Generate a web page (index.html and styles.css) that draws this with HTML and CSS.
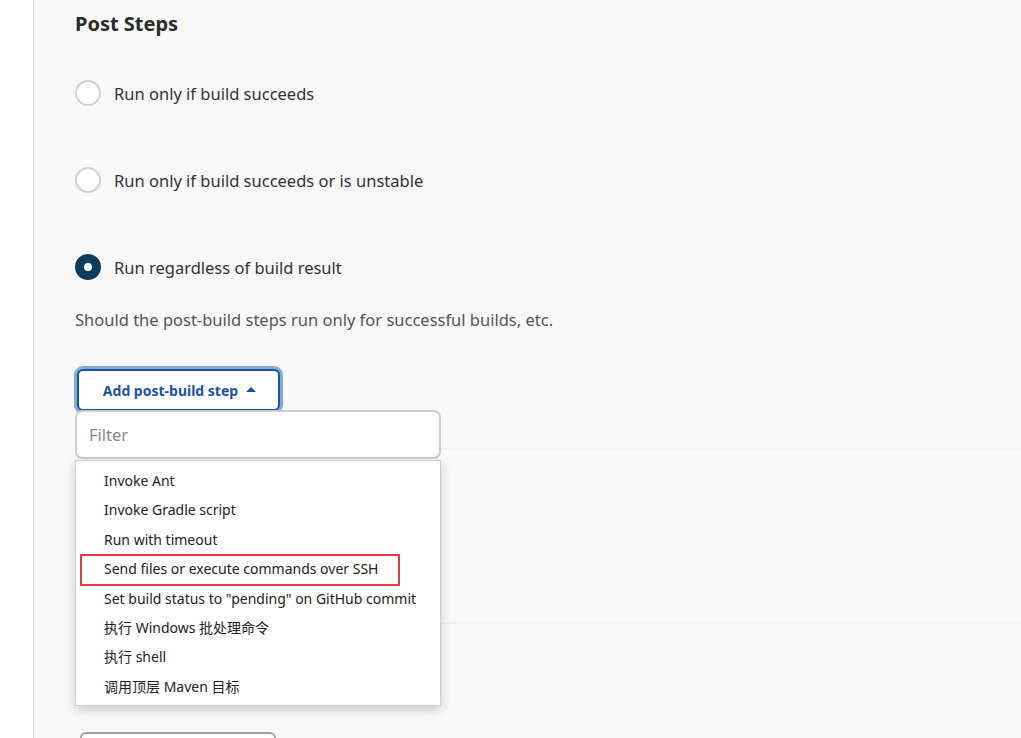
FILE: index.html
```html
<!DOCTYPE html>
<html>
<head>
<meta charset="utf-8">
<link rel="stylesheet" href="styles.css">
</head>
<body>
<div class="page">
  <aside class="side"></aside>
  <main class="main">
    <h2 class="title">Post Steps</h2>
    <div class="radios">
      <label class="radio"><span class="dot"></span><span>Run only if build succeeds</span></label>
      <label class="radio"><span class="dot"></span><span>Run only if build succeeds or is unstable</span></label>
      <label class="radio"><span class="dot on"></span><span>Run regardless of build result</span></label>
    </div>
    <p class="desc">Should the post-build steps run only for successful builds, etc.</p>
    <div class="addwrap">
      <button class="addbtn">Add post-build step <span class="tri"></span></button>
      <div class="popup">
        <div class="filter">Filter</div>
        <ul class="menu">
          <li>Invoke Ant</li>
          <li>Invoke Gradle script</li>
          <li>Run with timeout</li>
          <li class="hl">Send files or execute commands over SSH</li>
          <li>Set build status to "pending" on GitHub commit</li>
          <li>执行 Windows 批处理命令</li>
          <li>执行 shell</li>
          <li>调用顶层 Maven 目标</li>
        </ul>
      </div>
    </div>
    <section class="sect"></section>
    <section class="sect2"></section>
    <button class="btn2"></button>
  </main>
</div>
</body>
</html>
```
FILE: styles.css
```css
html, body { margin: 0; padding: 0; }
body {
  font-family: "Noto Sans", "Noto Sans CJK SC", sans-serif;
  background: #f8f8f8;
  color: #333;
  overflow: hidden;
  height: 738px;
}
.page { display: flex; height: 738px; }
.side {
  width: 33px;
  background: #fff;
  border-right: 1px solid #d4d4d4;
  flex: none;
}
.main {
  flex: 1;
  padding-left: 40px;
  background: #f8f8f8;
}
.title {
  margin: 10px 0 0 1px;
  font-size: 20px;
  font-weight: 700;
  color: #2b2b2b;
  line-height: 28px;
}
.radios { display: flex; flex-direction: column; gap: 61px; margin-top: 42px; }
.radio {
  display: flex;
  align-items: center;
  gap: 13px;
  font-size: 16.5px;
  color: #333;
  height: 26px;
  margin-left: 1px;
}
.dot {
  width: 22px; height: 22px;
  border: 2px solid #cbd3d8;
  border-radius: 50%;
  background: #fff;
  box-sizing: content-box;
  flex: none;
}
.dot.on {
  background: #0d3c5e;
  border-color: #0d3c5e;
  position: relative;
}
.dot.on::after {
  content: "";
  position: absolute;
  left: 7px; top: 7px;
  width: 8px; height: 8px;
  border-radius: 50%;
  background: #fff;
}
.desc {
  margin: 27px 0 0 1px;
  font-size: 16.5px;
  color: #555;
  line-height: 26px;
}
.addwrap { position: relative; margin-top: 36px; height: 42px; margin-left: 3px; }
.addbtn {
  width: 203px; height: 42px;
  border: 2px solid #1d4fa6;
  border-radius: 6px;
  background: #fff;
  box-shadow: 0 0 0 3px #84acd0;
  color: #1d4fa6;
  font-family: inherit;
  font-weight: 700;
  font-size: 14px;
  display: flex; align-items: center; justify-content: center; gap: 8px;
  padding: 0 0 0 2px;
  box-sizing: border-box;
  margin: 0;
}
.tri {
  width: 0; height: 0;
  border-left: 5px solid transparent;
  border-right: 5px solid transparent;
  border-bottom: 5px solid #1d4fa6;
  margin-bottom: 2px;
}
.popup {
  position: absolute;
  left: -2px; top: 41px;
  width: 366px;
  z-index: 5;
}
.filter {
  height: 49px;
  box-sizing: border-box;
  border: 2px solid #c6cfd4;
  border-radius: 7px;
  background: #fff;
  color: #888;
  font-size: 16.5px;
  padding-left: 12px;
  display: flex; align-items: center;
}
.menu {
  list-style: none;
  margin: 1px 0 0;
  padding: 5px 0 4px;
  background: #fff;
  border: 1px solid #c9d0d4;
  box-shadow: 0 4px 10px rgba(0,0,0,0.18);
}
.menu li {
  font-size: 14px;
  color: #222;
  height: 29.4px;
  line-height: 29.4px;
  padding-left: 28px;
  position: relative;
}
.menu li.hl::before {
  content: "";
  position: absolute;
  left: 4px; top: 0;
  width: 320px; height: 32px;
  border: 2px solid #e8393c;
  box-sizing: border-box;
}
.sect {
  margin-top: 37px;
  border-top: 2px solid #f0f0f0;
  height: 172px;
}
.sect2 {
  border-top: 2px solid #f0f0f0;
  height: 108px;
}
.btn2 {
  display: block;
  margin-left: 6px;
  width: 196px; height: 30px;
  border: 2px solid #9aa5ad;
  border-radius: 6px;
  background: #fff;
}
```
